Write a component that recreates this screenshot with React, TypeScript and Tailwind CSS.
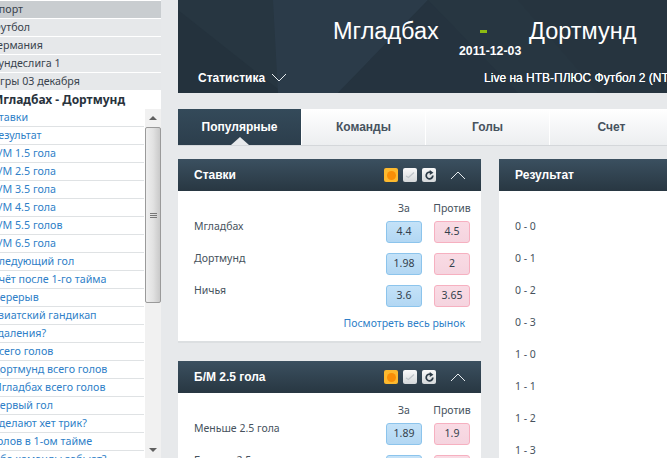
const crumbs = ['Спорт', 'Футбол', 'Германия', 'Бундеслига 1', 'Игры 03 декабря']

const markets = [
  'Ставки',
  'Результат',
  'Б/М 1.5 гола',
  'Б/М 2.5 гола',
  'Б/М 3.5 гола',
  'Б/М 4.5 гола',
  'Б/М 5.5 голов',
  'Б/М 6.5 гола',
  'Следующий гол',
  'Счёт после 1-го тайма',
  'Перерыв',
  'Азиатский гандикап',
  'Удаления?',
  'Всего голов',
  'Дортмунд всего голов',
  'Мгладбах всего голов',
  'Первый гол',
  'Сделают хет трик?',
  'Голов в 1-ом тайме',
  'Обе команды забьют?'
]

const scores = ['0 - 0', '0 - 1', '0 - 2', '0 - 3', '1 - 0', '1 - 1', '1 - 2', '1 - 3']

const tabs = ['Популярные', 'Команды', 'Голы', 'Счет']

const body = "font-['Noto_Sans',sans-serif]"
const head = "font-['Liberation_Sans',Arial,sans-serif]"

function Sidebar() {
  return (
    <aside className={`${body} w-[161px] shrink-0 h-full overflow-hidden bg-white text-[10.7px]`}>
      <div className="h-px" />
      {crumbs.map((item, index) => (
        <div
          key={item}
          className={`h-[18px] leading-[17px] border-b border-white text-[#39434d] whitespace-nowrap ${
            index === 0 ? 'bg-[#c9cdd0]' : 'bg-[#e6e8ea]'
          }`}
        >
          <span className="block -ml-[8px]">{item}</span>
        </div>
      ))}
      <div className="h-[18px] leading-[18px] text-[12px] font-bold text-[#28323c] whitespace-nowrap">
        <span className="block -ml-[8px]">Мгладбах - Дортмунд</span>
      </div>
      <div className="flex">
        <div className="w-[144px] shrink-0">
          {markets.map(item => (
            <div
              key={item}
              className="h-[18px] leading-[16px] border-b border-[#dfe2e4] text-[#2f7fc8] whitespace-nowrap"
            >
              <span className="block -ml-[8px]">{item}</span>
            </div>
          ))}
        </div>
        <div className="w-[16px] h-[350px] ml-px flex flex-col bg-[#f1f1f1]">
          <div className="h-[18px] flex items-center justify-center">
            <div className="w-0 h-0 border-x-[4px] border-x-transparent border-b-[4px] border-b-[#606060]" />
          </div>
          <div className="h-[176px] rounded-[2px] border border-[#9a9a9a] bg-gradient-to-r from-[#eeeeee] via-[#e2e2e2] to-[#c9c9c9] flex flex-col gap-px items-center justify-center">
            <div className="w-[7px] h-px bg-[#777]" />
            <div className="w-[7px] h-px bg-[#777]" />
            <div className="w-[7px] h-px bg-[#777]" />
          </div>
          <div className="flex-1" />
          <div className="h-[18px] flex items-center justify-center">
            <div className="w-0 h-0 border-x-[4px] border-x-transparent border-t-[4px] border-t-[#606060]" />
          </div>
        </div>
      </div>
    </aside>
  )
}

function Chevron({ up = false, className = '' }: { up?: boolean; className?: string }) {
  return (
    <svg width="16" height="9" viewBox="0 0 16 9" className={`shrink-0 ${className}`}>
      <path d={up ? 'M1 8 L8 1 L15 8' : 'M1 1 L8 8 L15 1'} fill="none" stroke="#e8edf0" strokeWidth="1" />
    </svg>
  )
}

function PanelIcons() {
  return (
    <div className="flex items-center">
      <div className="w-[14px] h-[14px] rounded-[2px] bg-[#fdb92e] flex items-center justify-center">
        <div className="w-[9px] h-[9px] rounded-full bg-[#f98e06]" />
      </div>
      <div className="w-[14px] h-[14px] ml-[5px] rounded-[2px] bg-gradient-to-b from-[#fafafa] to-[#d4d8da] flex items-center justify-center">
        <svg width="10" height="8" viewBox="0 0 10 8">
          <path d="M1 5 L3.5 6.5 L9 1.5" fill="none" stroke="#bfc5c9" strokeWidth="1.2" />
        </svg>
      </div>
      <div className="w-[14px] h-[14px] ml-[5px] rounded-[2px] bg-gradient-to-b from-[#fafafa] to-[#d4d8da] flex items-center justify-center">
        <svg width="11" height="11" viewBox="0 0 10 10">
          <path d="M8 5 A3 3 0 1 1 6.2 2.3" fill="none" stroke="#2d3c48" strokeWidth="1.6" />
          <path d="M5.2 0 L8.6 2.4 L5.2 4.6 Z" fill="#2d3c48" />
        </svg>
      </div>
      <Chevron up className="ml-[14px]" />
    </div>
  )
}

function PanelHeader({ title, icons = true }: { title: string; icons?: boolean }) {
  return (
    <div className="h-[32px] pl-[16px] pr-[15px] flex items-center justify-between bg-gradient-to-b from-[#3b5060] to-[#283742]">
      <span className={`${head} text-[12px] font-bold text-white`}>{title}</span>
      {icons && <PanelIcons />}
    </div>
  )
}

function OddsRow({ label, back, lay }: { label: string; back: string; lay: string }) {
  return (
    <div className="h-[32px] flex">
      <div className="w-[192px] -mt-[4px] leading-[18px] text-[#46525d]">{label}</div>
      <div className="w-[36px] h-[22px] rounded-[3px] border border-[#8cc4ec] bg-gradient-to-b from-[#c4e2f8] to-[#b2d7f3] text-[#33404c] flex items-center justify-center">
        {back}
      </div>
      <div className="w-[36px] h-[22px] ml-[12px] rounded-[3px] border border-[#f6b0c0] bg-gradient-to-b from-[#f9dbe4] to-[#f5d4df] text-[#33404c] flex items-center justify-center">
        {lay}
      </div>
    </div>
  )
}

function OddsHead() {
  return (
    <div className="h-[21px] flex text-[#46525d] leading-[16px]">
      <div className="w-[192px]" />
      <div className="w-[36px] text-center">За</div>
      <div className="w-[36px] ml-[12px] whitespace-nowrap flex justify-center">Против</div>
    </div>
  )
}

function Backdrop() {
  return (
    <svg className="absolute inset-0 w-full h-full" viewBox="0 0 489 93" preserveAspectRatio="none">
      <path d="M0 10 L105 93 L0 93 Z" fill="#24323d" />
      <path d="M95 0 L250 0 L160 93 L100 93 Z" fill="#2b3b49" />
      <path d="M250 0 L340 93 L160 93 Z" fill="#25333f" />
      <path d="M340 0 L489 0 L489 93 L420 93 Z" fill="#26343f" />
    </svg>
  )
}

export default function App() {
  return (
    <div className="w-[667px] h-[458px] overflow-hidden flex bg-[#e7e9eb]">
      <Sidebar />
      <main className="flex-1 min-w-0 ml-[17px]">
        <header className={`${head} relative h-[93px] overflow-hidden bg-[#273641] text-white`}>
          <Backdrop />
          <div className="relative pt-[15px] pl-[155px] flex items-start whitespace-nowrap text-[23.5px] leading-[32px]">
            <span className="w-[147px]">Мгладбах</span>
            <span className="w-[49px] flex justify-start pt-[15px]">
              <span className="w-[7px] h-[3px] bg-[#8dbb12]" />
            </span>
            <span>Дортмунд</span>
          </div>
          <div className="relative pl-[281px] -mt-[3px] text-[12.3px] leading-[14px] font-bold">2011-12-03</div>
          <div className="relative mt-[10px] pl-[20px] flex items-center whitespace-nowrap text-[12px] font-bold">
            <span>Статистика</span>
            <Chevron className="ml-[6px]" />
            <span className="ml-[197px] mt-[1px] font-normal [text-shadow:0_0_0.4px_#fff]">Live на НТВ-ПЛЮС Футбол 2 (NTV+ Futbol 2)</span>
          </div>
        </header>

        <nav className={`${head} mt-[16px] h-[37px] flex border-b border-[#d4d7da] text-[12px] font-bold`}>
          {tabs.map((tab, index) => (
            <div
              key={tab}
              className={`relative w-[124px] shrink-0 border-r border-white flex items-center justify-center ${
                index === 0 ? 'bg-gradient-to-b from-[#344a5a] to-[#2c3e4c] text-white' : 'bg-gradient-to-b from-white to-[#eceef0] text-[#47535e]'
              }`}
            >
              {tab}
              {index === 0 && (
                <div className="absolute bottom-0 left-[53px] w-0 h-0 border-x-[9px] border-x-transparent border-b-[8px] border-b-[#e7e9eb]" />
              )}
            </div>
          ))}
        </nav>

        <div className={`${body} mt-[13px] flex gap-[18px] text-[10.5px]`}>
          <div className="w-[303px] shrink-0">
            <section className="bg-white border-b-2 border-[#dcdfe1]">
              <PanelHeader title="Ставки" />
              <div className="pt-[9px] pl-[16px]">
                <OddsHead />
                <OddsRow label="Мгладбах" back="4.4" lay="4.5" />
                <OddsRow label="Дортмунд" back="1.98" lay="2" />
                <OddsRow label="Ничья" back="3.6" lay="3.65" />
                <div className="h-[25px] -mt-[1px] pr-[16px] text-right text-[#2f7fc8]">Посмотреть весь рынок</div>
              </div>
            </section>
            <section className="mt-[18px] bg-white">
              <PanelHeader title="Б/М 2.5 гола" />
              <div className="pt-[9px] pl-[16px]">
                <OddsHead />
                <OddsRow label="Меньше 2.5 гола" back="1.89" lay="1.9" />
                <OddsRow label="Больше 2.5 гола" back="1.9" lay="1.91" />
              </div>
            </section>
          </div>
          <section className="flex-1 min-w-0 bg-white">
            <PanelHeader title="Результат" icons={false} />
            <div className="pt-[26px] pl-[16px] text-[#46525d]">
              {scores.map(score => (
                <div key={score} className="h-[32px] leading-[18px]">
                  {score}
                </div>
              ))}
            </div>
          </section>
        </div>
      </main>
    </div>
  )
}
